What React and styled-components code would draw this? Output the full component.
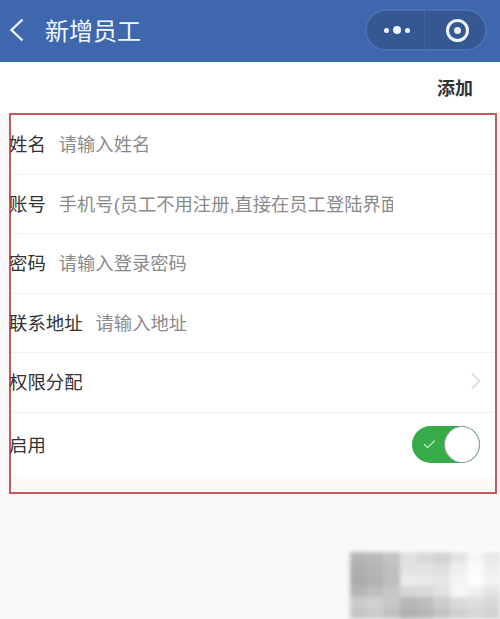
import React from 'react'
import styled, { createGlobalStyle } from 'styled-components'
import { ChevronRight, Check } from 'lucide-react'

const GlobalStyle = createGlobalStyle`
    html, body {
        margin: 0;
        padding: 0;
        background: #f8f8f8;
    }
    body {
        font-family: "Liberation Sans", "Noto Sans CJK SC", sans-serif;
    }
`

const mosaic = [
    [0xfd, 0xfd, 0xfd, 0xfd, 0xfd, 0xfd, 0xfd, 0xfd, 0xfd],
    [0xb4, 0xba, 0xc4, 0xe0, 0xd8, 0xd2, 0xe4, 0xf6, 0xe8],
    [0xae, 0xb4, 0xc0, 0xe2, 0xe2, 0xde, 0xee, 0xfc, 0xee],
    [0xac, 0xb2, 0xbe, 0xec, 0xe8, 0xe6, 0xf4, 0xfe, 0xf2],
    [0xb6, 0xbe, 0xc6, 0xd6, 0xd8, 0xe2, 0xf6, 0xf0, 0xe4],
    [0xcc, 0xd2, 0xc8, 0xb8, 0xbe, 0xcc, 0xdc, 0xde, 0xd8],
    [0xc6, 0xcc, 0xc0, 0xb0, 0xb6, 0xc4, 0xd0, 0xd6, 0xd2],
]

export default function App() {
    return (
        <Page>
            <GlobalStyle />
            <NavBar>
                <BackButton>
                    <svg width="16" height="24" viewBox="0 0 16 24" fill="none" stroke="currentColor" strokeWidth="2.4">
                        <polyline points="13.5,1.5 2.5,12 13.5,22.5" />
                    </svg>
                </BackButton>
                <NavTitle>新增员工</NavTitle>
                <Capsule>
                    <CapsulePart $left>
                        <Dots>
                            <Dot />
                            <Dot $big />
                            <Dot />
                        </Dots>
                    </CapsulePart>
                    <CapsulePart $divided>
                        <Target />
                    </CapsulePart>
                </Capsule>
            </NavBar>
            <Toolbar>
                <AddButton>添加</AddButton>
            </Toolbar>
            <Form>
                <Row>
                    <Label>姓名</Label>
                    <Hint>请输入姓名</Hint>
                </Row>
                <Row>
                    <Label>账号</Label>
                    <Hint $clip>手机号(员工不用注册,直接在员工登陆界面登陆)</Hint>
                </Row>
                <Row>
                    <Label>密码</Label>
                    <Hint>请输入登录密码</Hint>
                </Row>
                <Row>
                    <Label>联系地址</Label>
                    <Hint>请输入地址</Hint>
                </Row>
                <Row $between>
                    <Label>权限分配</Label>
                    <Arrow><ChevronRight size={28} strokeWidth={1.8} /></Arrow>
                </Row>
                <Row $between $last>
                    <Label>启用</Label>
                    <Toggle>
                        <Check size={15} strokeWidth={1.8} color="#cdeccd" />
                        <Knob />
                    </Toggle>
                </Row>
            </Form>
            <Bottom>
                <Mosaic>
                    {mosaic.flat().map((v, i) => (
                        <span key={i} style={{ background: `rgb(${v},${v},${v})` }} />
                    ))}
                </Mosaic>
            </Bottom>
        </Page>
    )
}

const Page = styled.div`
    width: 500px;
    height: 619px;
    overflow: hidden;
    display: flex;
    flex-direction: column;
    background: #f8f8f8;
`

const NavBar = styled.header`
    height: 62px;
    box-sizing: border-box;
    flex: none;
    display: flex;
    align-items: center;
    background: #3f67ae;
    border-bottom: 2px solid #3a6a9a;
    color: #f2f7ff;
`

const BackButton = styled.span`
    width: 36px;
    padding-left: 9px;
    display: flex;
    justify-content: flex-start;
    color: #eaf3ff;
`

const NavTitle = styled.h1`
    margin: 0;
    padding-top: 3px;
    flex: 1;
    font-size: 24px;
    font-weight: 400;
    line-height: 1;
`

const Capsule = styled.div`
    width: 122px;
    height: 42px;
    box-sizing: border-box;
    margin-right: 13px;
    display: flex;
    border-radius: 21px;
    background: #355792;
    border: 2px solid #4a70b4;
`

const CapsulePart = styled.div`
    flex: 1;
    display: flex;
    align-items: center;
    justify-content: center;
    padding-left: ${p => (p.$divided ? '5px' : '2px')};
    border-left: ${p => (p.$divided ? '1px solid #41659f' : 'none')};
`

const Dots = styled.div`
    display: flex;
    align-items: center;
    gap: 4px;
`

const Dot = styled.i`
    display: block;
    width: ${p => (p.$big ? '8px' : '5px')};
    height: ${p => (p.$big ? '8px' : '5px')};
    border-radius: 50%;
    background: #f0f6ff;
`

const Target = styled.div`
    width: 23px;
    height: 23px;
    box-sizing: border-box;
    border: 3px solid #eef4ff;
    border-radius: 50%;
    display: flex;
    align-items: center;
    justify-content: center;

    &::after {
        content: '';
        width: 7px;
        height: 7px;
        border-radius: 50%;
        background: #e4ecfa;
    }
`

const Toolbar = styled.div`
    height: 51px;
    box-sizing: border-box;
    flex: none;
    display: flex;
    align-items: center;
    justify-content: flex-end;
    padding: 0 27px 1px 0;
    background: #fff;
`

const AddButton = styled.span`
    font-size: 18px;
    font-weight: 700;
    color: #333;
`

const Form = styled.section`
    flex: none;
    width: 488px;
    height: 381px;
    box-sizing: border-box;
    margin-left: 9px;
    border: 2px solid #c9575f;
    background: linear-gradient(#fff 362px, #fdf9f6 362px);
`

const Row = styled.div`
    height: ${p => (p.$last ? '64px' : '59.5px')};
    box-sizing: border-box;
    display: flex;
    align-items: center;
    justify-content: ${p => (p.$between ? 'space-between' : 'flex-start')};
    padding: ${p => (p.$last ? '0 15px 1px 0' : '0 15px 2px 0')};
    border-bottom: ${p => (p.$last ? 'none' : '1px solid #f3f3f3')};
`

const Label = styled.span`
    flex: none;
    margin-left: -2px;
    margin-right: 13px;
    font-size: 18.4px;
    color: #333;
`

const Hint = styled.span`
    font-size: 18.3px;
    color: #8a8a8a;
    white-space: nowrap;
    overflow: hidden;
    max-width: ${p => (p.$clip ? '334px' : 'none')};
`

const Arrow = styled.span`
    display: flex;
    margin-right: -10px;
    color: #dedede;
`

const Toggle = styled.div`
    width: 68px;
    height: 37px;
    box-sizing: border-box;
    display: flex;
    align-items: center;
    justify-content: space-between;
    padding: 0 0 0 10px;
    border-radius: 19px;
    background: #35ab4a;
`

const Knob = styled.div`
    width: 36px;
    height: 37px;
    box-sizing: border-box;
    border-radius: 50%;
    background: #fff;
    border: 1px solid #8d9f90;
`

const Bottom = styled.div`
    flex: 1;
    display: flex;
    justify-content: flex-end;
    align-items: flex-end;
`

const Mosaic = styled.div`
    width: 150px;
    height: 71px;
    display: grid;
    grid-template-columns: repeat(9, 1fr);
    grid-template-rows: 4px repeat(6, 1fr);
    filter: blur(2px);
`
